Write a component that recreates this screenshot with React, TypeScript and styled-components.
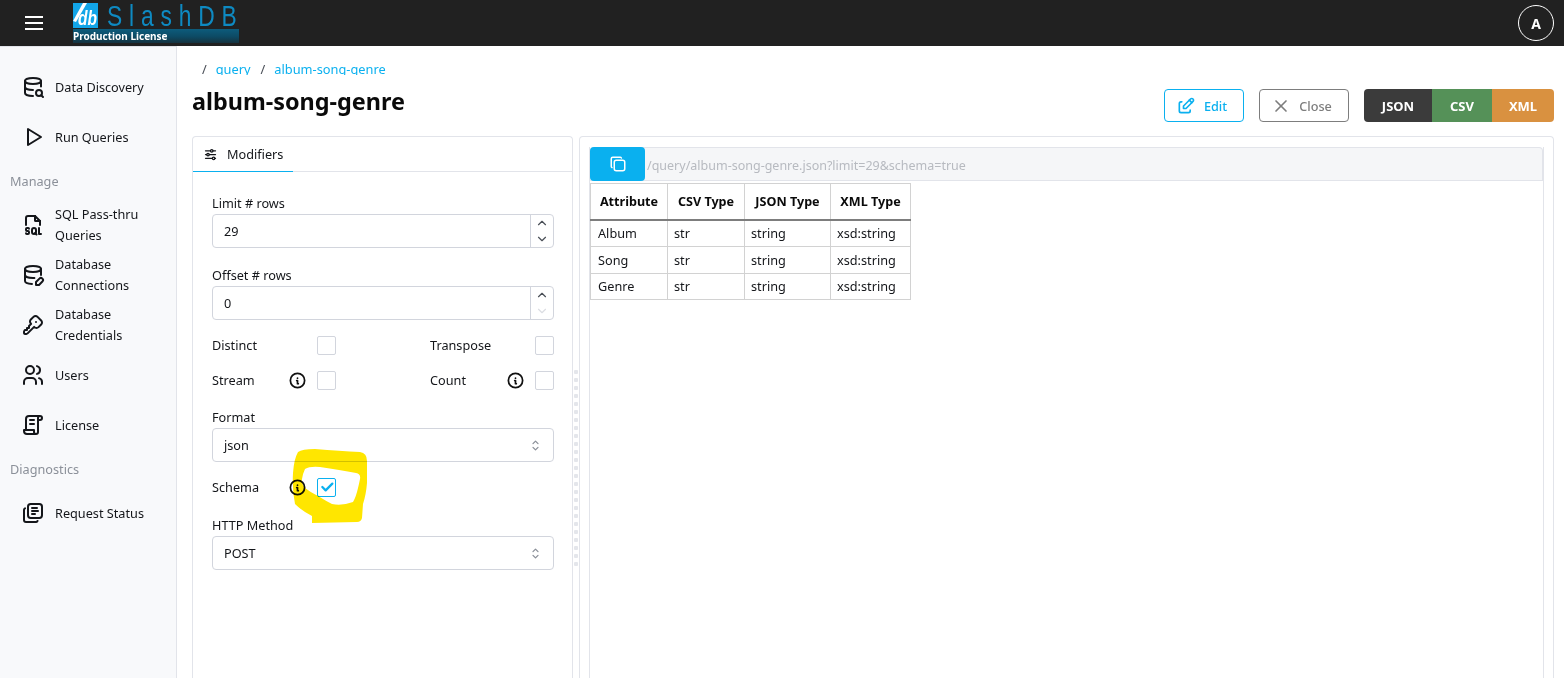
import React from 'react'
import styled, { createGlobalStyle } from 'styled-components'
import {
  TbAdjustmentsHorizontal,
  TbCheck,
  TbChevronDown,
  TbChevronUp,
  TbCopy,
  TbDatabaseEdit,
  TbDatabaseSearch,
  TbEdit,
  TbFileTypeSql,
  TbInfoCircle,
  TbKey,
  TbLibrary,
  TbLicense,
  TbPlayerPlay,
  TbSelector,
  TbUsers,
  TbX,
} from 'react-icons/tb'

const GlobalStyle = createGlobalStyle`
  html, body {
    margin: 0;
    height: 100%;
    overflow: hidden;
    background: #fff;
  }
  body {
    font-family: "Noto Sans", "Open Sans", sans-serif;
    font-size: 12.7px;
    color: #14161a;
  }
`

const rows = ['Album', 'Song', 'Genre']

const Logo: React.FC = () => (
  <LogoWrap>
    <LogoTop>
      <LogoMark width="25" height="25" viewBox="0 0 25 25">
        <rect width="25" height="25" fill="#12a5e8" />
        <path d="M0 18 L10 0 L14 0 L3 19 Z" fill="#fff" />
        <text
          x="5"
          y="22"
          fontFamily="Liberation Sans"
          fontStyle="italic"
          fontWeight="700"
          fontSize="20"
          textLength="19"
          lengthAdjust="spacingAndGlyphs"
          fill="#fff"
        >
          db
        </text>
      </LogoMark>
      <LogoName>SlashDB</LogoName>
    </LogoTop>
    <LicenseBar>Production License</LicenseBar>
  </LogoWrap>
)

const Sidebar: React.FC = () => (
  <Side>
    <NavItem><TbDatabaseSearch /><span>Data Discovery</span></NavItem>
    <NavItem><TbPlayerPlay /><span>Run Queries</span></NavItem>
    <NavGroup>Manage</NavGroup>
    <NavItem><TbFileTypeSql /><span>SQL Pass-thru Queries</span></NavItem>
    <NavItem><TbDatabaseEdit /><span>Database Connections</span></NavItem>
    <NavItem><TbKey /><span>Database Credentials</span></NavItem>
    <NavItem><TbUsers /><span>Users</span></NavItem>
    <NavItem><TbLicense /><span>License</span></NavItem>
    <NavGroup>Diagnostics</NavGroup>
    <NavItem><TbLibrary /><span>Request Status</span></NavItem>
  </Side>
)

const NumberField: React.FC<{ label: string; value: string; downDisabled?: boolean }> = ({ label, value, downDisabled }) => (
  <Field>
    <FieldLabel>{label}</FieldLabel>
    <InputBox>
      <InputValue>{value}</InputValue>
      <Stepper>
        <TbChevronUp />
        <StepDown $disabled={downDisabled}><TbChevronDown /></StepDown>
      </Stepper>
    </InputBox>
  </Field>
)

const SelectField: React.FC<{ label: string; value: string }> = ({ label, value }) => (
  <Field>
    <FieldLabel>{label}</FieldLabel>
    <InputBox>
      <InputValue>{value}</InputValue>
      <SelectArrow><TbSelector /></SelectArrow>
    </InputBox>
  </Field>
)

const CheckOption: React.FC<{ label: string; info?: boolean; checked?: boolean }> = ({ label, info, checked }) => (
  <Option>
    <OptionLabel>{label}</OptionLabel>
    {info && <InfoIcon><TbInfoCircle /></InfoIcon>}
    <CheckBox $checked={checked}>{checked && <TbCheck />}</CheckBox>
  </Option>
)

// the hand drawn marker ring round the schema checkbox
const Highlight: React.FC = () => (
  <Scribble width="80" height="78" viewBox="0 0 80 78">
    <path
      fillRule="evenodd"
      fill="#ffe600"
      d="M8 3 Q12 0 25 0 Q50 2 70 3 Q77 4 77 12 L77 34 Q76 46 73 55 L72 69 Q71 73 67 73 L22 74 L22 67 Q12 62 5 55 Q2 40 3 24 Q4 10 8 3 Z
         M15 20 Q20 17 30 18 Q50 21 66 24 Q71 25 70 30 Q69 35 68 39 Q66 48 63 53 Q52 57 42 55 Q36 52 28 47 Q20 43 15 39 Q11 34 12 30 Q13 24 15 20 Z"
    />
  </Scribble>
)

export default function App() {
  return (
    <Page>
      <GlobalStyle />
      <TopBar>
        <Hamburger>
          <span />
          <span />
          <span />
        </Hamburger>
        <Logo />
        <Avatar>A</Avatar>
      </TopBar>

      <Body>
        <Sidebar />
        <Main>
          <Crumbs>
            <CrumbSep>/</CrumbSep>
            <Crumb>query</Crumb>
            <CrumbSep>/</CrumbSep>
            <Crumb>album-song-genre</Crumb>
          </Crumbs>

          <TitleRow>
            <Title>album-song-genre</Title>
            <Actions>
              <ActionButton $color="#0ab0ef" $width={80}><TbEdit />Edit</ActionButton>
              <ActionButton $color="#7d7d7d" $width={90}><TbX />Close</ActionButton>
              <FormatGroup>
                <FormatButton $bg="#3b3b3b" $width={68}>JSON</FormatButton>
                <FormatButton $bg="#559158" $width={60}>CSV</FormatButton>
                <FormatButton $bg="#d99140" $width={62}>XML</FormatButton>
              </FormatGroup>
            </Actions>
          </TitleRow>

          <Panels>
            <LeftPanel>
              <Tabs>
                <Tab><TbAdjustmentsHorizontal />Modifiers</Tab>
              </Tabs>
              <Form>
                <NumberField label="Limit # rows" value="29" />
                <NumberField label="Offset # rows" value="0" downDisabled />
                <OptionGrid>
                  <CheckOption label="Distinct" />
                  <CheckOption label="Transpose" />
                  <CheckOption label="Stream" info />
                  <CheckOption label="Count" info />
                </OptionGrid>
                <SelectField label="Format" value="json" />
                <SchemaRow>
                  <CheckOption label="Schema" info checked />
                  <Highlight />
                </SchemaRow>
                <SelectField label="HTTP Method" value="POST" />
              </Form>
            </LeftPanel>

            <Splitter><SplitterDots /></Splitter>

            <RightPanel>
              <Result>
                <UrlBar>
                  <CopyButton><TbCopy /></CopyButton>
                  <UrlText>/query/album-song-genre.json?limit=29&amp;schema=true</UrlText>
                </UrlBar>
                <SchemaTable>
                  <thead>
                    <tr>
                      <HeadCell style={{ width: 77 }}>Attribute</HeadCell>
                      <HeadCell style={{ width: 77 }}>CSV Type</HeadCell>
                      <HeadCell style={{ width: 86 }}>JSON Type</HeadCell>
                      <HeadCell style={{ width: 80 }}>XML Type</HeadCell>
                    </tr>
                  </thead>
                  <tbody>
                    {rows.map(name => (
                      <tr key={name}>
                        <Cell>{name}</Cell>
                        <Cell>str</Cell>
                        <Cell>string</Cell>
                        <Cell>xsd:string</Cell>
                      </tr>
                    ))}
                  </tbody>
                </SchemaTable>
              </Result>
            </RightPanel>
          </Panels>
        </Main>
      </Body>
    </Page>
  )
}

const Page = styled.div`
  display: flex;
  flex-direction: column;
  width: 1564px;
  height: 678px;
  overflow: hidden;
`

const TopBar = styled.header`
  display: flex;
  align-items: center;
  flex: 0 0 46px;
  height: 46px;
  padding: 0 10px 0 25px;
  box-sizing: border-box;
  background: #212121;
`

const Hamburger = styled.div`
  display: flex;
  flex-direction: column;
  justify-content: space-between;
  width: 18px;
  height: 14px;
  margin-right: 30px;

  span {
    display: block;
    height: 2px;
    background: #fff;
  }
`

const LogoWrap = styled.div`
  display: flex;
  flex-direction: column;
  align-self: flex-start;
  width: 166px;
  padding-top: 3px;
`

const LogoTop = styled.div`
  display: flex;
  align-items: center;
  height: 25px;
  gap: 9px;
`

const LogoMark = styled.svg`
  flex: none;
`

const LogoName = styled.span`
  display: inline-block;
  font-family: "Liberation Sans", sans-serif;
  font-size: 30px;
  line-height: 25px;
  letter-spacing: 9px;
  color: #0e8ac2;
  white-space: nowrap;
  transform: scaleX(0.76);
  transform-origin: left center;
`

const LicenseBar = styled.div`
  height: 14px;
  margin-top: 1px;
  font-size: 10px;
  font-weight: 700;
  line-height: 14px;
  color: #fff;
  background: linear-gradient(180deg, #0d5c7c 0%, #0d4a64 55%, #16333f 100%);
`

const Avatar = styled.div`
  display: flex;
  align-items: center;
  justify-content: center;
  width: 36px;
  height: 36px;
  margin-left: auto;
  box-sizing: border-box;
  border: 1px solid #fff;
  border-radius: 50%;
  font-size: 14px;
  font-weight: 700;
  color: #fff;
`

const Body = styled.div`
  display: flex;
  flex: 1;
  min-height: 0;
`

const Side = styled.nav`
  flex: 0 0 177px;
  box-sizing: border-box;
  padding-top: 15px;
  background: #f8f9fb;
  border-right: 1px solid #e2e4ea;
  border-top: 1px solid #e2e4ea;
`

const NavItem = styled.div`
  display: flex;
  align-items: center;
  height: 50px;
  padding: 0 24px 0 21px;
  line-height: 21px;
  color: #14161a;

  svg {
    flex: 0 0 24px;
    width: 24px;
    height: 24px;
    margin-right: 10px;
  }
`

const NavGroup = styled.div`
  display: flex;
  align-items: center;
  height: 38px;
  padding-left: 10px;
  color: #8b9099;
`

const Main = styled.main`
  flex: 1;
  display: flex;
  flex-direction: column;
  min-width: 0;
  padding: 0 10px 0 15px;
`

const Crumbs = styled.div`
  display: flex;
  align-items: center;
  gap: 9px;
  height: 13px;
  margin-top: 16px;
  padding-left: 10px;
  overflow: hidden;
  line-height: 16px;
`

const CrumbSep = styled.span`
  color: #4a4f57;
`

const Crumb = styled.span`
  margin-right: 1px;
  font-size: 12.8px;
  color: #0ab0ef;
`

const TitleRow = styled.div`
  display: flex;
  align-items: flex-start;
  justify-content: space-between;
  height: 61px;
`

const Title = styled.h1`
  margin: 11px 0 0;
  font-size: 23.4px;
  font-weight: 700;
  line-height: 30px;
  color: #0a0a0a;
`

const Actions = styled.div`
  display: flex;
  gap: 15px;
  margin-top: 14px;
`

const ActionButton = styled.button<{ $color: string; $width: number }>`
  display: flex;
  align-items: center;
  justify-content: center;
  gap: 8px;
  width: ${p => p.$width}px;
  height: 33px;
  padding: 0 5px 0 0;
  background: #fff;
  border: 1px solid ${p => p.$color};
  border-radius: 4px;
  font: 500 12.7px "Noto Sans", sans-serif;
  color: ${p => p.$color};

  svg {
    width: 20px;
    height: 20px;
  }
`

const FormatGroup = styled.div`
  display: flex;
  border-radius: 4px;
  overflow: hidden;
`

const FormatButton = styled.button<{ $bg: string; $width: number }>`
  width: ${p => p.$width}px;
  height: 33px;
  padding: 0;
  border: 0;
  background: ${p => p.$bg};
  font: 700 13px "Noto Sans", sans-serif;
  color: #fff;
`

const Panels = styled.div`
  display: flex;
  flex: 1;
  min-height: 0;
`

const LeftPanel = styled.section`
  flex: 0 0 381px;
  box-sizing: border-box;
  background: #fff;
  border: 1px solid #e2e4ea;
  border-bottom: 0;
  border-radius: 4px 4px 0 0;
`

const Tabs = styled.div`
  display: flex;
  height: 35px;
  box-sizing: border-box;
  border-bottom: 1px solid #e2e4ea;
`

const Tab = styled.div`
  display: flex;
  align-items: center;
  gap: 9px;
  width: 100px;
  height: 35px;
  box-sizing: border-box;
  padding-left: 10px;
  border-bottom: 1px solid #0ab0ef;

  svg {
    width: 15px;
    height: 15px;
  }
`

const Form = styled.div`
  display: flex;
  flex-direction: column;
  padding: 22px 18px 0 19px;
`

const Field = styled.div`
  display: flex;
  flex-direction: column;
  margin-bottom: 18px;
`

const FieldLabel = styled.label`
  height: 20px;
  line-height: 18px;
`

const InputBox = styled.div`
  display: flex;
  align-items: stretch;
  height: 34px;
  box-sizing: border-box;
  border: 1px solid #d2d5dd;
  border-radius: 4px;
  background: #fff;
`

const InputValue = styled.span`
  flex: 1;
  padding-left: 11px;
  line-height: 32px;
`

const Stepper = styled.div`
  display: flex;
  flex-direction: column;
  align-items: center;
  justify-content: center;
  width: 23px;
  box-sizing: border-box;
  border-left: 1px solid #d2d5dd;
  color: #4a4f57;

  svg {
    display: block;
    width: 14px;
    height: 14px;
    margin: 1px 0;
  }
`

const StepDown = styled.span<{ $disabled?: boolean }>`
  color: ${p => (p.$disabled ? '#dcdee3' : 'inherit')};
`

const SelectArrow = styled.span`
  display: flex;
  align-items: center;
  padding-right: 10px;
  color: #8b9099;

  svg {
    width: 15px;
    height: 15px;
  }
`

const OptionGrid = styled.div`
  display: grid;
  grid-template-columns: 124px 124px;
  justify-content: space-between;
  row-gap: 17px;
  margin: -2px 0 19px;
`

const Option = styled.div`
  display: flex;
  align-items: center;
  height: 18px;
`

const OptionLabel = styled.span`
  margin-right: auto;
`

const InfoIcon = styled.span`
  display: flex;
  margin-right: 10px;

  svg {
    width: 19px;
    height: 19px;
    color: #111;
    stroke-width: 2.2;
  }
`

const CheckBox = styled.span<{ $checked?: boolean }>`
  display: flex;
  align-items: center;
  justify-content: center;
  flex: 0 0 19px;
  height: 19px;
  box-sizing: border-box;
  border: 1px solid ${p => (p.$checked ? '#0ab0ef' : '#d2d5dd')};
  border-radius: 2px;
  background: #fff;
  color: #0ab0ef;

  svg {
    flex: none;
    width: 16px;
    height: 16px;
    stroke-width: 3.4;
  }
`

const SchemaRow = styled.div`
  position: relative;
  width: 124px;
  margin: -2px 0 20px;
`

const Scribble = styled.svg`
  position: absolute;
  left: 78px;
  top: -29px;
  mix-blend-mode: multiply;
  pointer-events: none;
`

const Splitter = styled.div`
  display: flex;
  align-items: flex-start;
  justify-content: center;
  flex: 0 0 6px;
  padding-top: 232px;
`

const SplitterDots = styled.div`
  width: 6px;
  height: 200px;
  background: radial-gradient(circle, #e4e6eb 2px, transparent 2.5px) 0 0 / 6px 8px repeat-y;
`

const RightPanel = styled.section`
  flex: 1;
  min-width: 0;
  box-sizing: border-box;
  padding: 10px 9px 0 9px;
  border: 1px solid #e2e4ea;
  border-bottom: 0;
  border-radius: 4px 4px 0 0;
`

const Result = styled.div`
  height: 100%;
  border-left: 1px solid #e2e4ea;
  border-right: 1px solid #e2e4ea;
`

const UrlBar = styled.div`
  display: flex;
  align-items: center;
  gap: 2px;
  height: 34px;
  box-sizing: border-box;
  background: #f5f6f8;
  border: 1px solid #e2e4ea;
  border-left: 0;
  border-radius: 4px 4px 0 0;
`

const CopyButton = styled.button`
  display: flex;
  align-items: center;
  justify-content: center;
  width: 55px;
  height: 34px;
  margin-top: -1px;
  margin-bottom: -1px;
  padding: 0;
  border: 0;
  border-radius: 4px;
  background: #0ab0ef;
  color: #fff;

  svg {
    width: 18px;
    height: 18px;
  }
`

const UrlText = styled.span`
  padding-top: 2px;
  font-size: 12.5px;
  color: #b7bac0;
  white-space: nowrap;
`

const SchemaTable = styled.table`
  margin-top: 2px;
  border-collapse: collapse;
  table-layout: fixed;
  width: 320px;

  tbody tr:last-child td {
    height: 26px;
  }
`

const HeadCell = styled.th`
  height: 36px;
  box-sizing: border-box;
  padding: 0;
  border: 1px solid #d2d2d2;
  border-bottom: 2px solid #7d7d7d;
  font-size: 12.6px;
  font-weight: 700;
  color: #0a0a0a;
`

const Cell = styled.td`
  height: 27px;
  box-sizing: border-box;
  padding: 0 0 1px 6px;
  border: 1px solid #d2d2d2;
  color: #14161a;

  &:first-child {
    padding-left: 7px;
  }
`
